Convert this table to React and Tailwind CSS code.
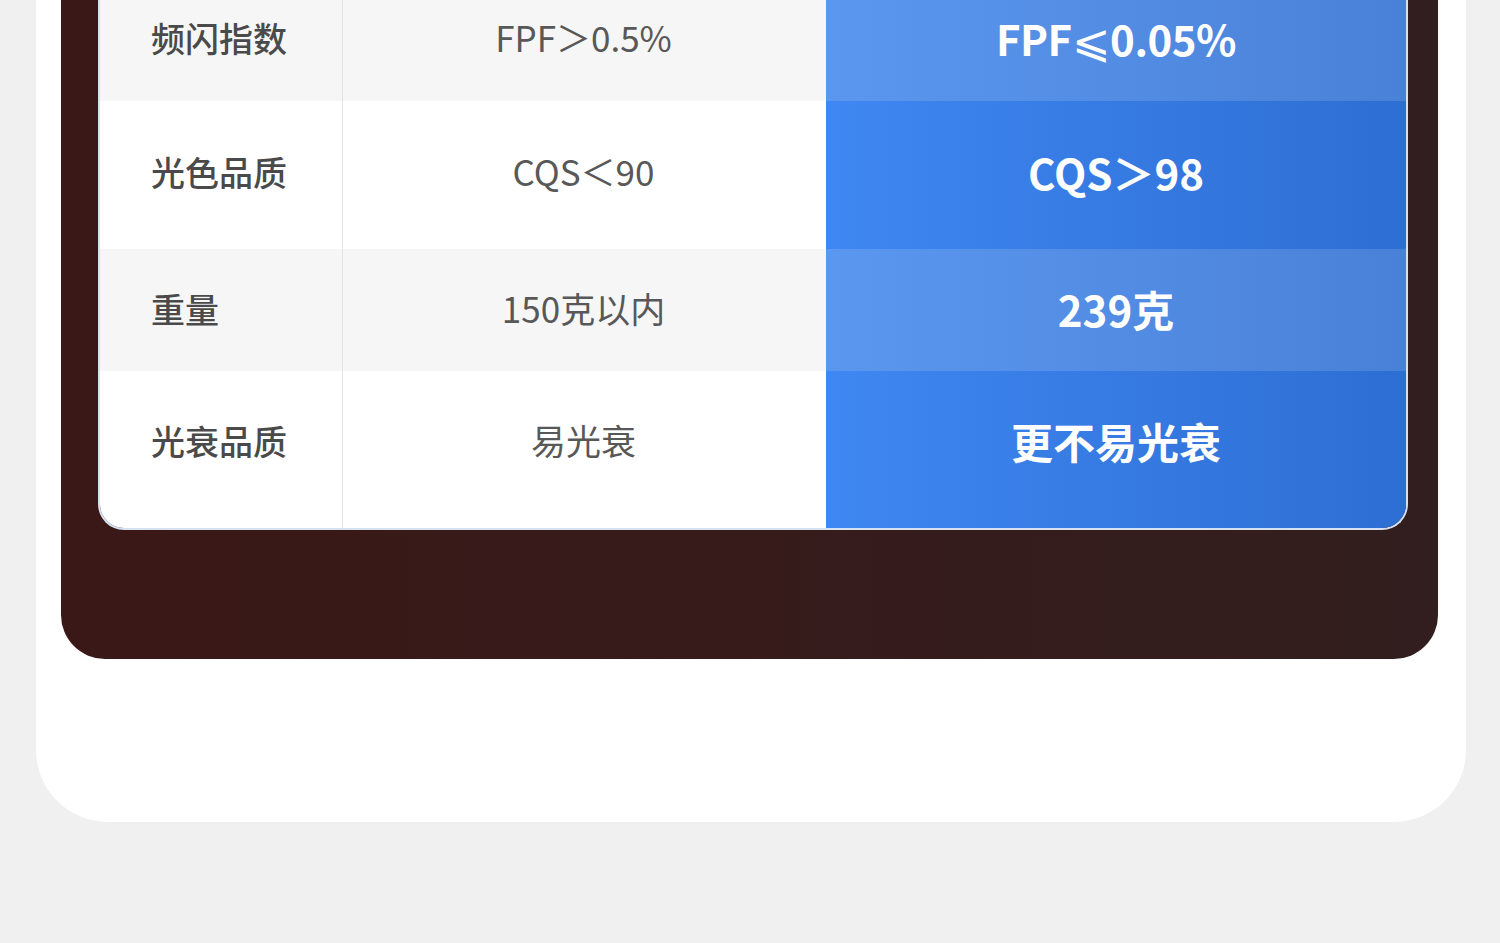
const rows = [
  { label: "频闪指数", normal: "FPF＞0.5%", ours: ["FPF", "⩽", "0.05%"], h: "h-[101px]", pb: "pb-[27px]", shade: true },
  { label: "光色品质", normal: "CQS＜90", ours: "CQS＞98", h: "h-[148px]", pb: "pb-[8px]", shade: false },
  { label: "重量", normal: "150克以内", ours: "239克", h: "h-[122px]", pb: "pb-[3px]", shade: true },
  { label: "光衰品质", normal: "易光衰", ours: "更不易光衰", h: "h-[157px]", pb: "pb-[19px]", shade: false },
]

function CompareRow({ row }) {
  const base = row.shade ? "bg-[#f6f6f6]" : "bg-white"
  const blue = row.shade
    ? "bg-linear-to-r from-[#5b97ef] to-[#4a81d8]"
    : "bg-linear-to-r from-[#3f87f2] to-[#2d6ed3]"

  return (
    <>
      <div className={`${row.h} ${row.pb} ${base} flex items-center border-r border-[#e4e4e4] pl-[51px] text-[34px] font-medium text-[#4a4a4a]`}>
        {row.label}
      </div>
      <div className={`${row.h} ${row.pb} ${base} flex items-center justify-center pr-[2px] text-[35px] text-[#585858]`}>
        {row.normal}
      </div>
      <div className={`${row.h} ${row.pb} ${blue} flex items-center justify-center text-[42px] font-bold text-white`}>
        {Array.isArray(row.ours) ? (
          <span className="flex items-center tracking-[-0.5px]">
            {row.ours[0]}
            <span className="text-[46px] leading-none font-normal">{row.ours[1]}</span>
            {row.ours[2]}
          </span>
        ) : (
          row.ours
        )}
      </div>
    </>
  )
}

export default function App() {
  return (
    <div
      className="min-h-screen bg-[#f0f0f0] pl-[36px] pr-[34px] pb-[121px]"
      style={{ fontFamily: '"Noto Sans CJK SC", "Noto Sans", sans-serif' }}
    >
      <div className="rounded-b-[72px] bg-white pb-[163px] pl-[25px] pr-[28px]">
        <div className="rounded-b-[44px] bg-linear-to-r from-[#3a1817] to-[#321e1e] pb-[129px] pl-[37px] pr-[30px]">
          <div className="overflow-hidden rounded-b-[26px] border-2 border-t-0 border-[#d6e2f2]">
            <div className="grid grid-cols-[243px_483px_1fr]">
              {rows.map((row) => (
                <CompareRow key={row.label} row={row} />
              ))}
            </div>
          </div>
        </div>
      </div>
    </div>
  )
}
